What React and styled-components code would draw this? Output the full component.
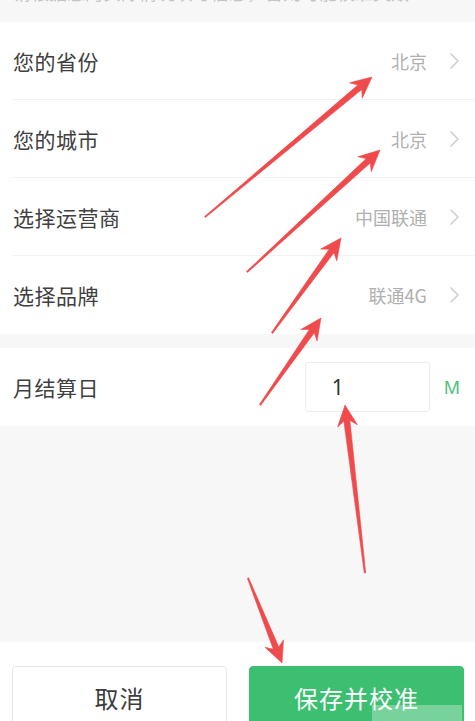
import React from 'react';
import styled, { createGlobalStyle } from 'styled-components';

const GlobalStyle = createGlobalStyle`
  html, body {
    margin: 0;
    padding: 0;
    background: #f7f7f7;
  }
  body {
    font-family: "Noto Sans CJK SC", "Noto Sans", "Liberation Sans", sans-serif;
  }
`;

const settingRows = [
  { id: 'province', label: '您的省份', value: '北京' },
  { id: 'city', label: '您的城市', value: '北京' },
  { id: 'carrier', label: '选择运营商', value: '中国联通' },
  { id: 'brand', label: '选择品牌', value: '联通4G' },
];

// tail -> tip pairs for the red pointer marks
const pointers = [
  { from: [205, 217], to: [372, 77] },
  { from: [247, 272], to: [380, 150] },
  { from: [272, 333], to: [341, 238] },
  { from: [260, 405], to: [321, 318] },
  { from: [365, 573], to: [345, 405] },
  { from: [248, 578], to: [282, 663] },
];

const arrowPoints = ({ from, to }) => {
  const [x1, y1] = from;
  const [x2, y2] = to;
  const len = Math.hypot(x2 - x1, y2 - y1);
  const ux = (x2 - x1) / len;
  const uy = (y2 - y1) / len;
  const nx = -uy;
  const ny = ux;
  const headLen = 21;
  const headW = 10;
  const neckW = 3;
  const tailW = 0.7;
  const bx = x2 - ux * headLen;
  const by = y2 - uy * headLen;
  // the head is notched a little, so the shaft joins slightly ahead of its back corners
  const jx = x2 - ux * (headLen - 5);
  const jy = y2 - uy * (headLen - 5);
  const pts = [
    [x1 + nx * tailW, y1 + ny * tailW],
    [jx + nx * neckW, jy + ny * neckW],
    [bx + nx * headW, by + ny * headW],
    [x2, y2],
    [bx - nx * headW, by - ny * headW],
    [jx - nx * neckW, jy - ny * neckW],
    [x1 - nx * tailW, y1 - ny * tailW],
  ];
  return pts.map((p) => p.map((v) => v.toFixed(1)).join(',')).join(' ');
};

const Chevron = () => (
  <svg width="11" height="18" viewBox="0 0 11 18">
    <polyline points="2,2 9,9 2,16" fill="none" stroke="#cfcfcf" strokeWidth="1.6" strokeLinecap="round" strokeLinejoin="round" />
  </svg>
);

const App = () => {
  return (
    <Page>
      <GlobalStyle />
      <Notice>
        <span>请根据您的实际情况填写信息，否则可能校准失败</span>
      </Notice>

      <Group>
        {settingRows.map((row) => (
          <Row key={row.id}>
            <Label>{row.label}</Label>
            <Value>{row.value}</Value>
            <Chevron />
          </Row>
        ))}
      </Group>

      <Group $gap>
        <Row>
          <Label>月结算日</Label>
          <DayInput>1</DayInput>
          <Unit>M</Unit>
        </Row>
      </Group>

      <Spacer />

      <Footer>
        <Button>取消</Button>
        <Button $primary>保存并校准</Button>
      </Footer>

      <Marks width="475" height="721" viewBox="0 0 475 721">
        {pointers.map((p, i) => (
          <polygon key={i} points={arrowPoints(p)} fill="#ef4a4c" stroke="#ef4a4c" strokeWidth="0.6" strokeLinejoin="round" />
        ))}
      </Marks>
      <Stamp />
    </Page>
  );
};

const Page = styled.div`
  position: relative;
  min-height: 100vh;
  display: flex;
  flex-direction: column;
  background: #f7f7f7;
  overflow: hidden;
`;

const Notice = styled.div`
  height: 22px;
  overflow: hidden;
  padding-left: 13px;

  span {
    display: block;
    margin-top: -19px;
    font-size: 18px;
    line-height: 22px;
    color: #c4c4c4;
    white-space: nowrap;
  }
`;

const Group = styled.div`
  background: #ffffff;
  margin-top: ${(p) => (p.$gap ? '14px' : '0')};
  display: flex;
  flex-direction: column;
`;

const Row = styled.div`
  height: 78px;
  margin-left: 13px;
  padding-right: 15px;
  display: flex;
  align-items: center;
  box-sizing: border-box;
  border-bottom: 1px solid #f2f2f2;

  &:last-child {
    border-bottom: none;
  }
`;

const Label = styled.div`
  flex: 1;
  font-size: 21px;
  color: #404040;
  letter-spacing: 0.5px;
`;

const Value = styled.div`
  font-size: 18px;
  color: #b0b0b0;
  margin-right: 22px;
`;

const DayInput = styled.div`
  width: 125px;
  height: 50px;
  box-sizing: border-box;
  border: 1px solid #ededed;
  border-radius: 3px;
  padding-left: 26px;
  display: flex;
  align-items: center;
  font-size: 21px;
  color: #333333;
  margin-right: 14px;
  font-family: "Noto Sans", "Liberation Sans", sans-serif;
`;

const Unit = styled.div`
  font-size: 18px;
  color: #4cc27c;
  font-family: "Noto Sans", "Liberation Sans", sans-serif;
`;

const Spacer = styled.div`
  flex: 1;
`;

const Footer = styled.div`
  height: 79px;
  background: #ffffff;
  padding: 24px 11px 0 12px;
  box-sizing: border-box;
  display: flex;
  gap: 22px;
`;

const Button = styled.div`
  flex: 1;
  height: 62px;
  box-sizing: border-box;
  border-radius: 4px;
  display: flex;
  align-items: center;
  justify-content: center;
  font-size: 24px;
  letter-spacing: 1px;
  color: ${(p) => (p.$primary ? '#ffffff' : '#3c3c3c')};
  background: ${(p) => (p.$primary ? '#3dbf72' : '#ffffff')};
  border: 1px solid ${(p) => (p.$primary ? '#3dbf72' : '#e6e6e6')};
`;

const Marks = styled.svg`
  position: absolute;
  left: 0;
  top: 0;
  pointer-events: none;
`;

const Stamp = styled.div`
  position: absolute;
  left: 372px;
  top: 705px;
  width: 90px;
  height: 16px;
  background: rgba(255, 255, 255, 0.3);
  pointer-events: none;
`;

export default App;
